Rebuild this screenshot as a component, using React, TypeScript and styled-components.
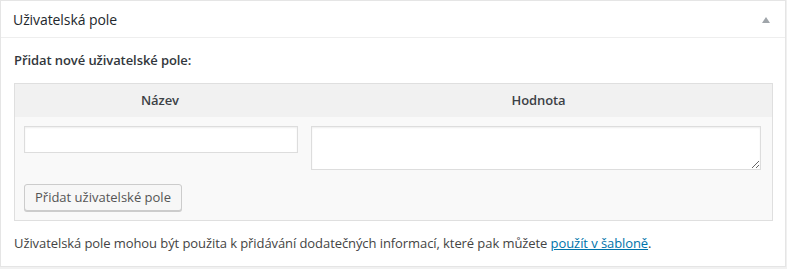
import React from 'react';
import styled, { createGlobalStyle } from 'styled-components';

const Global = createGlobalStyle`
  html, body {
    margin: 0;
    padding: 0;
    background: #f1f1f1;
  }
  body {
    font-family: 'Open Sans', 'Noto Sans', sans-serif;
    font-size: 13px;
    letter-spacing: -0.08px;
    color: #444;
  }
`;

const Postbox = styled.div`
  width: 786px;
  box-sizing: border-box;
  background: #fff;
  border: 1px solid #e5e5e5;
  box-shadow: 0 1px 1px rgba(0, 0, 0, 0.04);
`;

const Header = styled.div`
  display: flex;
  align-items: center;
  justify-content: space-between;
  padding: 9px 12px 7px;
  border-bottom: 1px solid #eee;
`;

const Title = styled.h2`
  margin: 0;
  font-size: 14px;
  font-weight: 400;
  line-height: 20px;
  color: #23282d;
`;

const Toggle = styled.button`
  display: flex;
  align-items: center;
  justify-content: center;
  width: 12px;
  height: 12px;
  margin-right: 1px;
  padding: 0;
  border: 0;
  background: none;
  cursor: pointer;
`;

const Inside = styled.div`
  padding: 12px 12px 13px 13px;
`;

const Label = styled.p`
  margin: 0 0 13px;
  font-weight: 600;
  line-height: 20px;
  color: #32373c;
`;

const FieldTable = styled.div`
  border: 1px solid #dfdfdf;
  background: #f9f9f9;
`;

const HeadRow = styled.div`
  display: grid;
  grid-template-columns: 290px 1fr;
  background: #f1f1f1;
`;

const HeadCell = styled.div`
  text-align: center;
  font-weight: 600;
  line-height: 33px;
  color: #3c4146;
`;

const Body = styled.div`
  display: grid;
  grid-template-columns: 274px 450px;
  column-gap: 13px;
  row-gap: 14px;
  align-items: start;
  padding: 9px 12px 9px 9px;
`;

const TextInput = styled.input`
  box-sizing: border-box;
  width: 274px;
  height: 27px;
  margin: 0;
  padding: 3px 5px;
  border: 1px solid #ddd;
  border-radius: 0;
  background: #fff;
  box-shadow: inset 0 1px 2px rgba(0, 0, 0, 0.07);
  font: inherit;
  color: #32373c;
  outline: none;
`;

const TextArea = styled.textarea`
  box-sizing: border-box;
  width: 450px;
  height: 44px;
  margin: 0;
  padding: 2px 6px;
  border: 1px solid #ddd;
  border-radius: 0;
  background: #fff;
  box-shadow: inset 0 1px 2px rgba(0, 0, 0, 0.07);
  font: inherit;
  color: #32373c;
  outline: none;
  display: block;
`;

const Button = styled.button`
  justify-self: start;
  box-sizing: border-box;
  height: 27px;
  padding: 0 10px 1px;
  border: 1px solid #ccc;
  border-radius: 3px;
  background: #f7f7f7;
  box-shadow: 0 1px 0 #ccc;
  font: inherit;
  line-height: 24px;
  color: #555;
  white-space: nowrap;
  cursor: pointer;
`;

const Note = styled.p`
  margin: 12px 0 0;
  line-height: 20px;
  color: #444;

  a {
    color: #0073aa;
    text-decoration: underline;
  }
`;

export default function App() {
  return (
    <>
      <Global />
      <Postbox>
        <Header>
          <Title>Uživatelská pole</Title>
          <Toggle aria-label="Přepnout panel">
            <svg width="8" height="6" viewBox="0 0 8 6">
              <path d="M4 0 L8 6 L0 6 Z" fill="#a0a5aa" />
            </svg>
          </Toggle>
        </Header>
        <Inside>
          <Label>Přidat nové uživatelské pole:</Label>
          <FieldTable>
            <HeadRow>
              <HeadCell>Název</HeadCell>
              <HeadCell>Hodnota</HeadCell>
            </HeadRow>
            <Body>
              <TextInput type="text" />
              <TextArea />
              <Button>Přidat uživatelské pole</Button>
            </Body>
          </FieldTable>
          <Note>
            Uživatelská pole mohou být použita k přidávání dodatečných informací, které pak můžete{' '}
            <a href="#">použít v šabloně</a>.
          </Note>
        </Inside>
      </Postbox>
    </>
  );
}
